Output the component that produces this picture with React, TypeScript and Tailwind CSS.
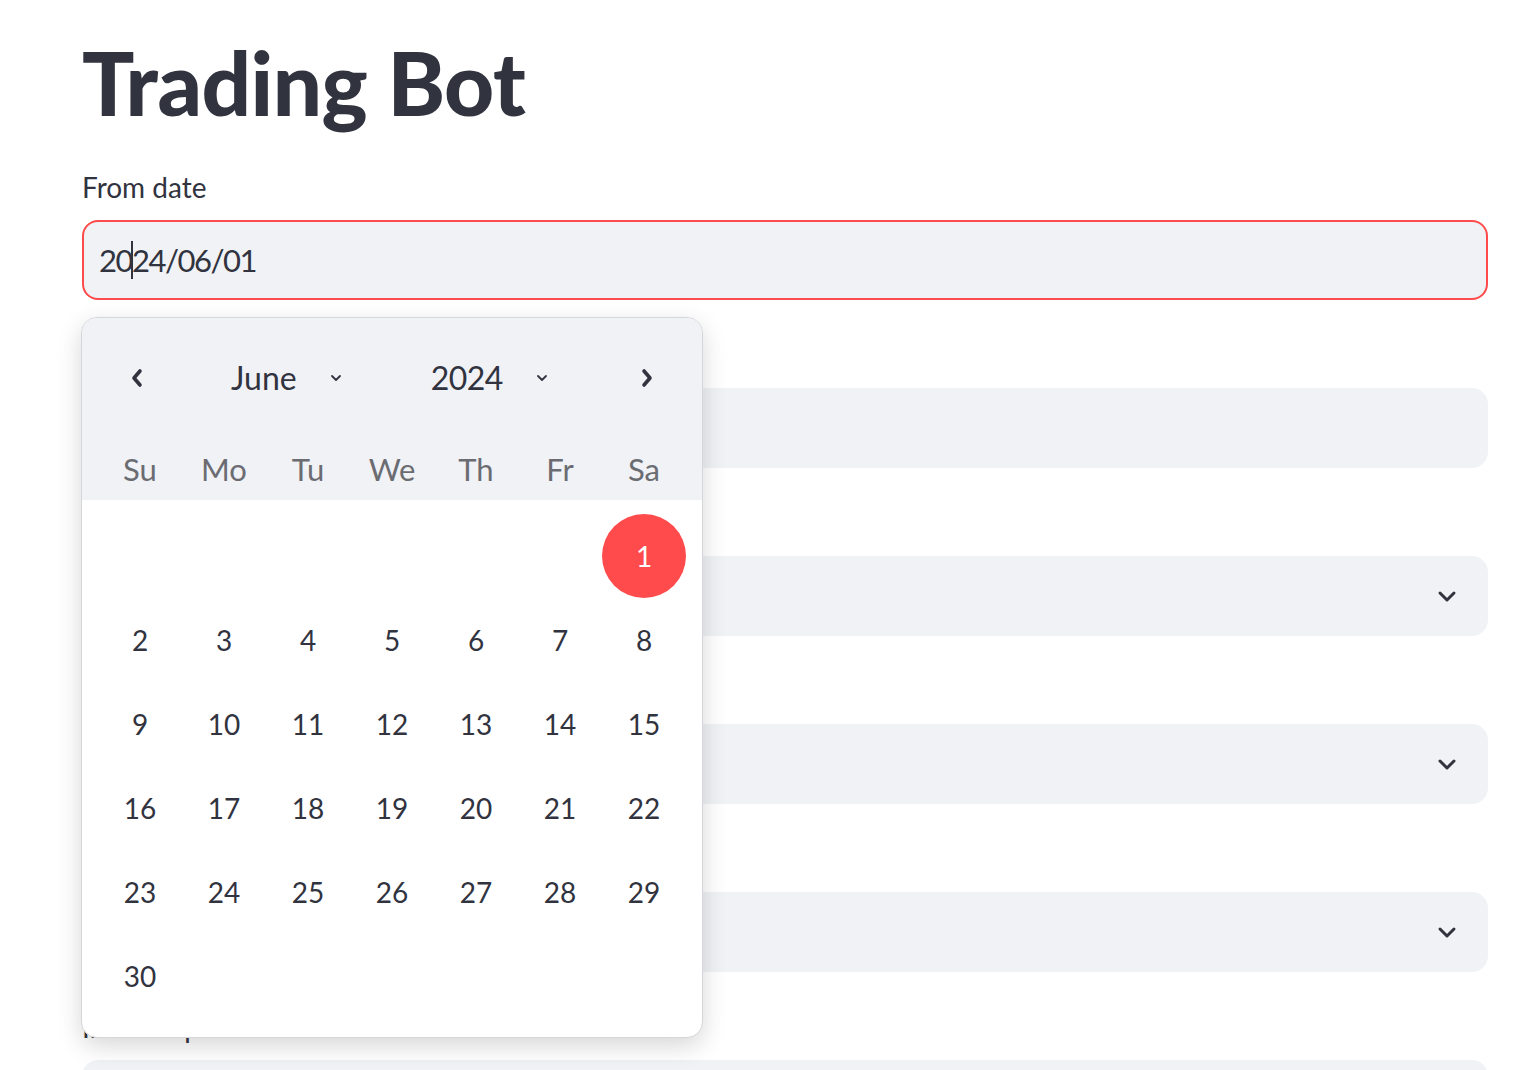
import React from "react";

const ink = "text-[#31333f]";

function ChevronDown({ className = "" }: { className?: string }) {
  return (
    <svg viewBox="0 0 24 24" className={className} fill="none" stroke="currentColor" strokeWidth={3} strokeLinecap="round" strokeLinejoin="round">
      <path d="M5 9l7 7 7-7" />
    </svg>
  );
}

function SmallDown() {
  return (
    <svg viewBox="0 0 12 8" className="w-[12px] h-[8px]" fill="none" stroke="#31333f" strokeWidth={1.8} strokeLinecap="round" strokeLinejoin="round">
      <path d="M2 2l4 4 4-4" />
    </svg>
  );
}

function Arrow({ dir }: { dir: "left" | "right" }) {
  return (
    <svg viewBox="0 0 12 20" className="w-[12px] h-[20px]" fill="none" stroke="#31333f" strokeWidth={3.6} strokeLinecap="round" strokeLinejoin="round">
      {dir === "left" ? <path d="M9 3L3 10l6 7" /> : <path d="M3 3l6 7-6 7" />}
    </svg>
  );
}

function Calendar() {
  const weekdays = ["Su", "Mo", "Tu", "We", "Th", "Fr", "Sa"];
  const cells: (number | null)[] = [null, null, null, null, null, null];
  for (let d = 1; d <= 30; d++) cells.push(d);

  return (
    <div className="absolute left-[-1px] top-[148px] w-[622px] bg-white border border-[#d5d6da] rounded-[16px] overflow-hidden shadow-[0_8px_24px_rgba(0,0,0,0.16)] z-10">
      <div className="bg-[#f0f2f6] pt-[20px]">
        <div className="flex items-center h-[80px] px-[27px]">
          <button className="w-[56px] h-[56px] flex items-center justify-center">
            <Arrow dir="left" />
          </button>
          <div className="ml-[66px] flex items-center">
            <span className={`text-[32px] ${ink}`}>June</span>
            <span className="ml-[33px] flex items-center"><SmallDown /></span>
          </div>
          <div className="ml-[89px] flex items-center">
            <span className={`text-[32px] tracking-[-0.5px] ${ink}`}>2024</span>
            <span className="ml-[33px] flex items-center"><SmallDown /></span>
          </div>
          <button className="ml-auto w-[56px] h-[56px] flex items-center justify-center">
            <Arrow dir="right" />
          </button>
        </div>
        <div className="grid grid-cols-7 px-[16px] mt-[20px] h-[62px]">
          {weekdays.map((w) => (
            <div key={w} className="flex items-center justify-center text-[31px] text-[#6b6c72]">
              {w}
            </div>
          ))}
        </div>
      </div>
      <div className="grid grid-cols-7 px-[16px] pt-[14px] pb-[19px]">
        {cells.map((d, i) => (
          <div key={i} className="h-[84px] flex items-center justify-center">
            {d === 1 ? (
              <div className="w-[84px] h-[84px] rounded-full bg-[#ff4b4b] text-white flex items-center justify-center text-[28px]">
                1
              </div>
            ) : (
              <span className={`text-[28px] ${ink}`}>{d ?? ""}</span>
            )}
          </div>
        ))}
      </div>
    </div>
  );
}

function Field({ label, select }: { label: string; select?: boolean }) {
  return (
    <div className="mb-[37px]">
      <div className={`h-[36px] leading-[36px] text-[28px] ${ink} mb-[15px]`}>{label}</div>
      <div className="h-[80px] rounded-[16px] bg-[#f0f2f6] flex items-center justify-end pr-[29px]">
        {select && <ChevronDown className={`w-[24px] h-[24px] ${ink}`} />}
      </div>
    </div>
  );
}

export default function App() {
  return (
    <div className="h-screen bg-white overflow-hidden" style={{ fontFamily: "Lato, 'Noto Sans', sans-serif" }}>
      <div className="ml-[82px] w-[1406px] pt-[28px]">
        <h1 className={`text-[87px] font-black leading-[110px] tracking-[-0.5px] ${ink} mb-[31px]`}>Trading Bot</h1>

        <div className="relative mb-[37px]">
          <div className={`h-[36px] leading-[36px] text-[28px] ${ink} mb-[15px]`}>From date</div>
          <div className="h-[80px] rounded-[16px] bg-[#f0f2f6] border-2 border-[#ff4b4b] flex items-center pl-[15px]">
            <span className={`text-[31px] tracking-[-1.5px] ${ink} flex items-center`}>
              20<span className="inline-block w-[2px] h-[38px] bg-[#31333f] mx-[-1px]" />24/06/01
            </span>
          </div>
          <Calendar />
        </div>

        <Field label="To date" />
        <Field label="Symbol" select />
        <Field label="Interval" select />
        <Field label="Strategy" select />
        <Field label="Initial capital" />
      </div>
    </div>
  );
}
